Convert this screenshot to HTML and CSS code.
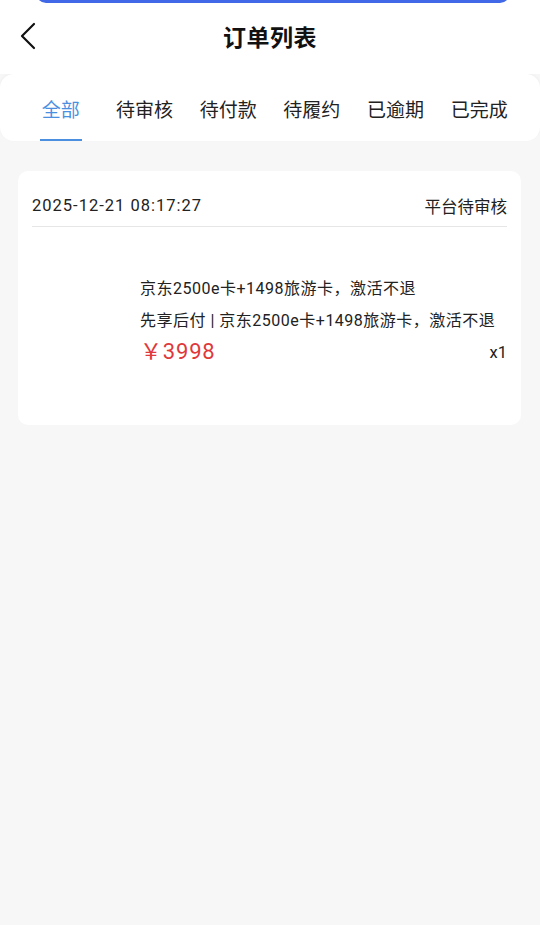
FILE: index.html
```html
<!DOCTYPE html>
<html lang="zh-CN">
<head>
<meta charset="utf-8">
<link rel="stylesheet" href="styles.css">
</head>
<body>
<div class="page">
  <div class="topbar"></div>
  <header class="header">
    <svg class="back" width="18" height="28" viewBox="0 0 18 28"><path d="M15 2 L3 14 L15 26" fill="none" stroke="#111" stroke-width="2.2" stroke-linecap="round" stroke-linejoin="round"/></svg>
    <h1 class="title">订单列表</h1>
  </header>
  <nav class="tabs">
    <div class="tab active">全部</div>
    <div class="tab">待审核</div>
    <div class="tab">待付款</div>
    <div class="tab">待履约</div>
    <div class="tab">已逾期</div>
    <div class="tab">已完成</div>
  </nav>
  <main class="list">
    <section class="card">
      <div class="card-head">
        <span class="time">2025-12-21 08:17:27</span>
        <span class="status">平台待审核</span>
      </div>
      <div class="card-body">
        <div class="thumb"></div>
        <div class="info">
          <div class="name">京东2500e卡+1498旅游卡，激活不退</div>
          <div class="sub">先享后付 | 京东2500e卡+1498旅游卡，激活不退</div>
          <div class="price-row">
            <span class="price">￥3998</span>
            <span class="qty">x1</span>
          </div>
        </div>
      </div>
    </section>
  </main>
</div>
</body>
</html>
```
FILE: styles.css
```css
* { box-sizing: border-box; }
html, body { margin: 0; padding: 0; }
body {
  background: #f7f7f7;
  font-family: Roboto, "Noto Sans CJK SC", sans-serif;
  color: #222;
  width: 540px;
  height: 925px;
  overflow: hidden;
}
.page { position: relative; }
.topbar {
  position: absolute;
  left: 36px;
  top: -10px;
  width: 474px;
  height: 13px;
  background: #4168e6;
  border-radius: 0 0 10px 10px;
  z-index: 2;
}
.header {
  position: relative;
  height: 74px;
  background: #fff;
  display: flex;
  align-items: center;
  justify-content: center;
}
.back {
  position: absolute;
  left: 19px;
  top: 22px;
}
.title {
  margin: 0;
  font-size: 23px;
  font-weight: 700;
  color: #111;
  letter-spacing: 0.5px;
  padding-bottom: 3px;
}
.tabs {
  background: #fff;
  border-radius: 14px;
  height: 67px;
  display: flex;
  padding: 0 19px;
  box-shadow: 0 -1px 3px rgba(0,0,0,0.04);
}
.tab {
  flex: 1;
  display: flex;
  align-items: center;
  justify-content: center;
  font-size: 19px;
  color: #222;
  position: relative;
  padding-top: 2px;
}
.tab.active { color: #4a8fe0; }
.tab.active::after {
  content: "";
  position: absolute;
  bottom: 0;
  left: 50%;
  width: 42px;
  margin-left: -21px;
  height: 2px;
  background: #4a8fe0;
}
.list { padding: 30px 19px 0 18px; }
.card {
  background: #fff;
  border-radius: 10px;
  padding: 0 14px;
  height: 254px;
}
.card-head {
  height: 56px;
  display: flex;
  align-items: center;
  justify-content: space-between;
  border-bottom: 1.5px solid #e6e6e6;
  font-size: 16.5px;
  color: #222;
  padding-top: 14px;
}
.time { letter-spacing: 1px; }
.card-body {
  display: flex;
  padding-top: 46px;
}
.thumb { width: 108px; height: 100px; flex-shrink: 0; }
.info { flex: 1; }
.name, .sub {
  font-size: 16px;
  line-height: 32px;
  color: #222;
  white-space: nowrap;
  letter-spacing: 0.5px;
}
.price-row {
  display: flex;
  justify-content: space-between;
  align-items: center;
  line-height: 26px;
}
.price { font-size: 22px; color: #e0393b; letter-spacing: 0.8px; }
.qty { font-size: 16.5px; color: #222; padding-top: 3px; }
```
